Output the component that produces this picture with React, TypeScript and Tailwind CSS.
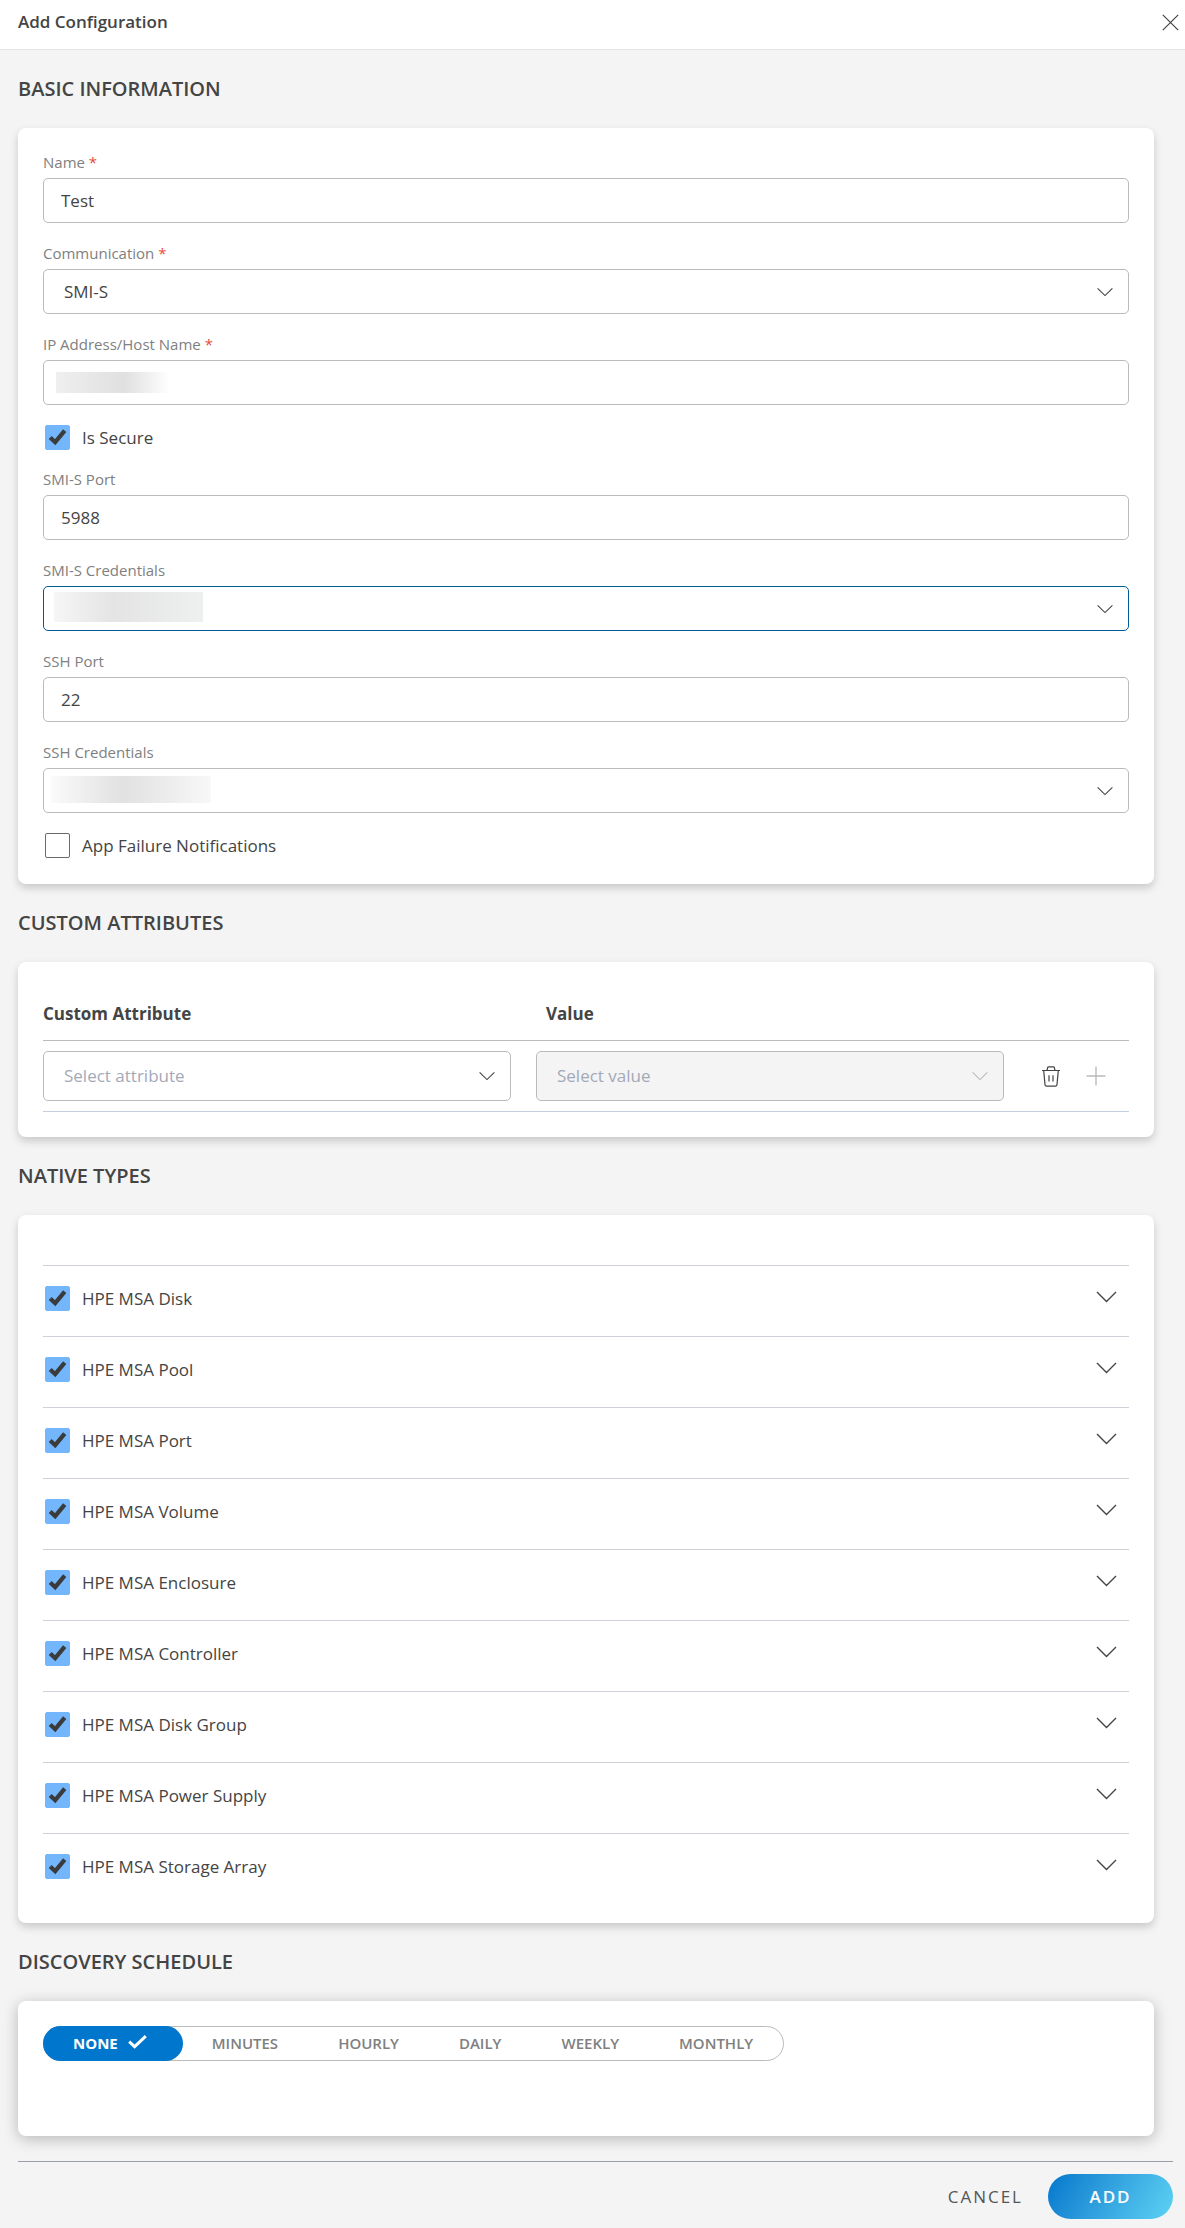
import React, { useState } from 'react';

const NATIVE_TYPES = [
  'HPE MSA Disk',
  'HPE MSA Pool',
  'HPE MSA Port',
  'HPE MSA Volume',
  'HPE MSA Enclosure',
  'HPE MSA Controller',
  'HPE MSA Disk Group',
  'HPE MSA Power Supply',
  'HPE MSA Storage Array',
];

const SCHEDULES = ['NONE', 'MINUTES', 'HOURLY', 'DAILY', 'WEEKLY', 'MONTHLY'];

const CONTROL = 'block w-full rounded-[5px] border text-[17px] text-[#444444] outline-none';
const CARD = 'mr-[19px] rounded-lg bg-white px-[25px]';
const CARD_SHADOW = 'shadow-[0_4px_8px_rgba(0,0,0,0.18)]';

const ChevronSmall = ({ className = '' }: { className?: string }) => (
  <svg
    className={`pointer-events-none absolute right-4 top-1/2 -translate-y-1/2 ${className}`}
    width="16" height="9" viewBox="0 0 16 9" fill="none" stroke="currentColor" strokeWidth="1.1"
  >
    <path d="M.6.8 8 8.1 15.4.8" />
  </svg>
);

const SectionTitle = ({ children }: { children: React.ReactNode }) => (
  <h2 className="py-[25px] text-xl leading-7 font-semibold text-[#444444]">{children}</h2>
);

interface FieldProps {
  id: string;
  label: string;
  required?: boolean;
  children: React.ReactNode;
}

const Field = ({ id, label, required, children }: FieldProps) => (
  <div>
    <label htmlFor={id} className="mb-1.5 block text-[15px] leading-[19px] text-[#808080]">
      {label} {required && <span className="text-[#e74c3c]">*</span>}
    </label>
    <div className="relative">{children}</div>
  </div>
);

const CheckRow = ({ label, checked }: { label: string; checked?: boolean }) => (
  <label className="ml-0.5 flex h-[23px] items-center gap-3 text-[17px] leading-[23px] text-[#444444]">
    <span className="relative block size-[25px]">
      <input
        type="checkbox"
        defaultChecked={checked}
        className="peer block size-[25px] appearance-none rounded-[2px] border border-[#6b6b6b] bg-white checked:border-[#73b6fc] checked:bg-[#73b6fc]"
      />
      <svg
        className="pointer-events-none absolute inset-0 hidden peer-checked:block"
        width="25" height="25" viewBox="0 0 25 25" fill="none" stroke="#3b3b3b" strokeWidth="4.2"
      >
        <path d="M5.2 12.4 10.2 17.2 19.7 5.6" />
      </svg>
    </span>
    {label}
  </label>
);

const App: React.FC = () => {
  const [schedule, setSchedule] = useState('NONE');

  return (
    <div className="min-h-screen bg-[#f4f4f4] font-['Open_Sans','Noto_Sans',sans-serif] text-[#444444]">
      <header className="flex items-center justify-between border-b border-[#e4e4e4] bg-white pt-2.5 pr-1.5 pb-[15px] pl-[18px]">
        <h1 className="text-[17px] leading-6 font-semibold">Add Configuration</h1>
        <button type="button" aria-label="Close">
          <svg width="17" height="17" viewBox="0 0 17 17" fill="none" stroke="#444444" strokeWidth="1.2">
            <path d="M.8.8 16.2 16.2M16.2.8.8 16.2" />
          </svg>
        </button>
      </header>

      <form className="pr-3 pb-2 pl-[18px]" onSubmit={(e) => e.preventDefault()}>
        {/* Basic information */}
        <SectionTitle>BASIC INFORMATION</SectionTitle>
        <section className={`${CARD} ${CARD_SHADOW} flex flex-col gap-[21px] pt-[25px] pb-[27px]`}>
          <Field id="name" label="Name" required>
            <input id="name" defaultValue="Test" className={`${CONTROL} h-[45px] border-[#bbbbbb] px-[17px]`} />
          </Field>
          <Field id="communication" label="Communication" required>
            <select id="communication" className={`${CONTROL} h-[45px] appearance-none border-[#bbbbbb] px-5`}>
              <option>SMI-S</option>
            </select>
            <ChevronSmall />
          </Field>
          <Field id="host" label="IP Address/Host Name" required>
            <input id="host" className={`${CONTROL} h-[45px] border-[#bbbbbb] px-[17px]`} />
            <div className="pointer-events-none absolute top-3 left-[13px] h-[21px] w-[114px] bg-linear-to-r from-[#efefef] via-[#e0e0e0] via-60% to-white" />
          </Field>
          <CheckRow label="Is Secure" checked />
          <Field id="smis-port" label="SMI-S Port">
            <input id="smis-port" defaultValue="5988" className={`${CONTROL} h-[45px] border-[#bbbbbb] px-[17px]`} />
          </Field>
          <Field id="smis-credentials" label="SMI-S Credentials">
            <select id="smis-credentials" className={`${CONTROL} h-[45px] appearance-none border-[#005a96] px-5`} />
            <div className="pointer-events-none absolute top-1.5 left-[11px] h-[30px] w-[149px] bg-linear-to-r from-[#f6f6f6] via-[#e4e4e4] via-40% to-[#eeefef]" />
            <ChevronSmall />
          </Field>
          <Field id="ssh-port" label="SSH Port">
            <input id="ssh-port" defaultValue="22" className={`${CONTROL} h-[45px] border-[#bbbbbb] px-[17px]`} />
          </Field>
          <Field id="ssh-credentials" label="SSH Credentials">
            <select id="ssh-credentials" className={`${CONTROL} h-[45px] appearance-none border-[#bbbbbb] px-5`} />
            <div className="pointer-events-none absolute top-2 left-2 h-[27px] w-40 bg-linear-to-r from-[#fafafa] via-[#e1e1e1] via-45% to-[#f8f8f8]" />
            <ChevronSmall />
          </Field>
          <CheckRow label="App Failure Notifications" />
        </section>

        {/* Custom attributes */}
        <SectionTitle>CUSTOM ATTRIBUTES</SectionTitle>
        <section className={`${CARD} ${CARD_SHADOW} py-[25px]`}>
          <table className="w-full table-fixed border-separate border-spacing-0 text-left text-[17px]">
            <thead>
              <tr className="h-[54px]">
                <th className="border-b border-[#bbbbbb] font-bold">Custom Attribute</th>
                <th className="border-b border-[#bbbbbb] pl-2.5 font-bold">Value</th>
                <th className="w-[100px] border-b border-[#bbbbbb]" />
              </tr>
            </thead>
            <tbody>
              <tr>
                <td className="border-b border-[#c5d0de] py-2.5 pr-[25px]">
                  <div className="relative">
                    <select aria-label="Custom Attribute" className="block h-[50px] w-full appearance-none rounded-[5px] border border-[#bbbbbb] px-5 text-[#a3a9b8]">
                      <option>Select attribute</option>
                    </select>
                    <ChevronSmall />
                  </div>
                </td>
                <td className="border-b border-[#c5d0de] py-2.5 pr-[25px]">
                  <div className="relative">
                    <select aria-label="Value" disabled className="block h-[50px] w-full appearance-none rounded-[5px] border border-[#bbbbbb] bg-[#f4f4f4] px-5 text-[#a3a9b8] opacity-100">
                      <option>Select value</option>
                    </select>
                    <ChevronSmall className="text-[#bbbbbb]" />
                  </div>
                </td>
                <td className="border-b border-[#c5d0de]">
                  <div className="flex items-center gap-[26px] pl-[13px]">
                    <button type="button" aria-label="Delete attribute">
                      <svg width="18" height="21" viewBox="0 0 18 21" fill="none" stroke="#444444" strokeWidth="1.2">
                        <path d="M0 4.5h18M5 4.5 5.7 1.5Q5.9.8 6.7.8h4.6q.8 0 1 .7L13 4.5M1.7 4.5 3 18.6q.1 1.6 1.7 1.6h8.6q1.6 0 1.7-1.6L16.3 4.5M7 9.2v6.3M11 9.2v6.3" />
                      </svg>
                    </button>
                    <button type="button" aria-label="Add attribute" disabled>
                      <svg width="20" height="20" viewBox="0 0 20 20" fill="none" stroke="#bbbbbb" strokeWidth="1.4">
                        <path d="M10 .5v19M.5 10h19" />
                      </svg>
                    </button>
                  </div>
                </td>
              </tr>
            </tbody>
          </table>
        </section>

        {/* Native types */}
        <SectionTitle>NATIVE TYPES</SectionTitle>
        <section className={`${CARD} ${CARD_SHADOW} pt-[50px] pb-[19px]`}>
          {NATIVE_TYPES.map((type) => (
            <div key={type} className="flex h-[71px] items-start justify-between border-t border-[#cfd1d8] pt-[21px]">
              <CheckRow label={type} checked />
              <button type="button" aria-label={`Expand ${type}`} className="mt-1 mr-3">
                <svg width="21" height="12" viewBox="0 0 21 12" fill="none" stroke="#444444" strokeWidth="1.4">
                  <path d="M1 1 10.5 10.5 20 1" />
                </svg>
              </button>
            </div>
          ))}
        </section>

        {/* Discovery schedule */}
        <SectionTitle>DISCOVERY SCHEDULE</SectionTitle>
        <section className={`${CARD} flex pt-[25px] pb-[75px] shadow-[0_3px_15px_rgba(0,0,0,0.25)]`}>
          <div className="flex h-[35px] rounded-full border border-[#bbbbbb]">
            {SCHEDULES.map((item) => {
              const active = item === schedule;
              return (
                <button
                  key={item}
                  type="button"
                  aria-pressed={active}
                  onClick={() => setSchedule(item)}
                  className={
                    active
                      ? '-m-px flex items-center gap-2.5 rounded-full bg-[#0077cc] pr-9 pl-[30px] text-[15px] font-bold text-white'
                      : 'px-[30px] text-[15px] font-semibold text-[#808080]'
                  }
                >
                  {item}
                  {active && (
                    <svg className="-mt-1" width="19" height="14" viewBox="0 0 19 14" fill="none" stroke="currentColor" strokeWidth="3">
                      <path d="M1.2 6.6 6.6 11.6 17.8 1.2" />
                    </svg>
                  )}
                </button>
              );
            })}
          </div>
        </section>

        <footer className="mt-[25px] flex items-center justify-end gap-[25px] border-t border-[#9a9ea8] pt-3">
          <button type="button" className="text-[17px] tracking-[2px] text-[#555555]">CANCEL</button>
          <button type="submit" className="h-[45px] w-[125px] rounded-full bg-linear-120 from-[#0077cc] to-[#5dd3f3] text-[17px] font-semibold tracking-[2px] text-white">
            ADD
          </button>
        </footer>
      </form>
    </div>
  );
};

export default App;
